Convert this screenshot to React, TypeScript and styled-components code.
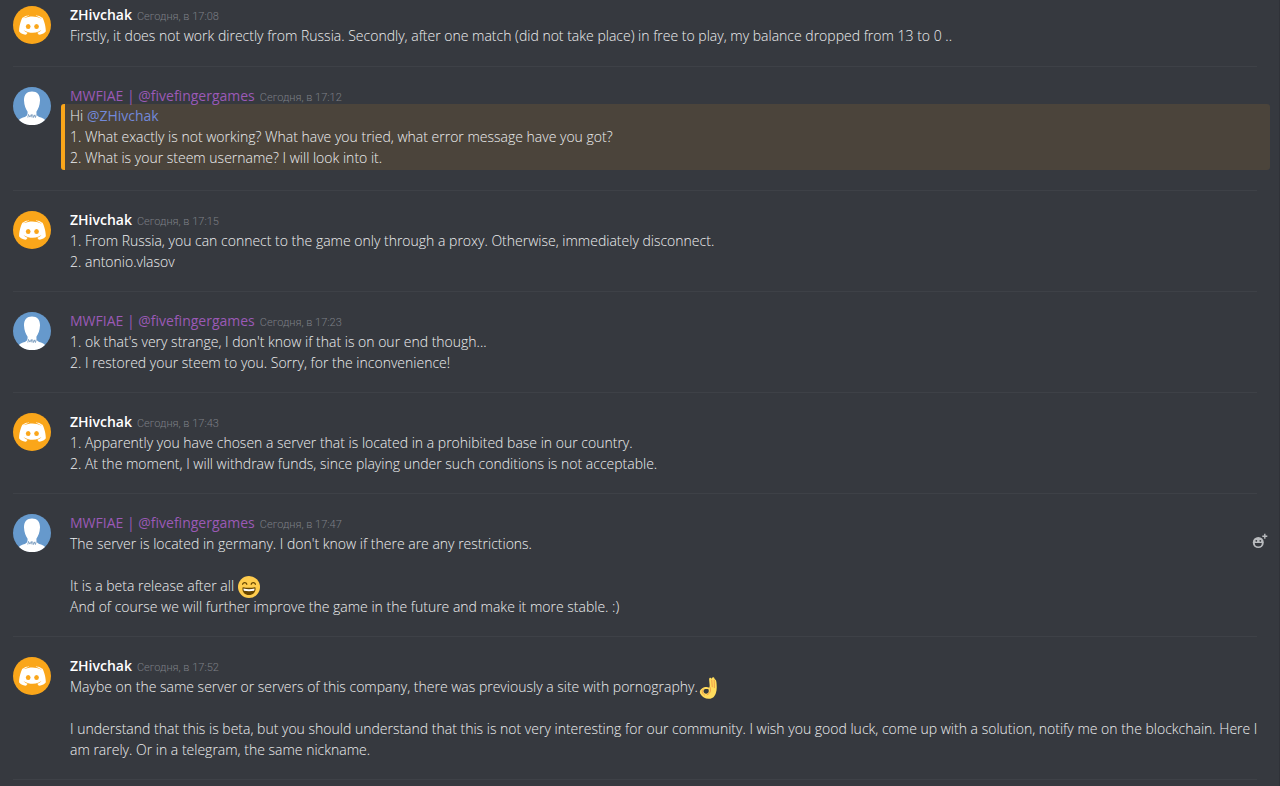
import React from "react";
import styled, { createGlobalStyle } from "styled-components";

const GlobalStyle = createGlobalStyle`
  * { box-sizing: border-box; }
  body {
    margin: 0;
    background: #36393f;
    color: #eeeff0;
    font-family: "Open Sans", "Noto Sans", sans-serif;
    font-size: 14px;
    font-weight: 300;
    font-variant-ligatures: none;
    line-height: 21px;
  }
`;

const Chat = styled.main`
  padding: 4px 10px 0 13px;
  border-right: 1px solid #303238;
  min-height: 100vh;
`;

const Message = styled.article<{ $first?: boolean }>`
  position: relative;
  display: flex;
  gap: 10px;
  margin-right: 12px;
  padding: ${(p) => (p.$first ? "0 0 20px" : "18px 0 19px")};
  border-bottom: 1px solid #3e4147;
`;

const AvatarImage = styled.svg`
  flex: none;
  width: 38px;
  height: 38px;
  margin-top: 2px;
`;

const Content = styled.div`
  flex: 1;
  min-width: 0;
`;

const Header = styled.header`
  display: flex;
  align-items: baseline;
  gap: 5px;
  height: 21px;
  padding-left: 9px;
`;

const Author = styled.h2<{ $staff?: boolean }>`
  margin: 0;
  font-size: 14px;
  font-weight: ${(p) => (p.$staff ? 400 : 600)};
  color: ${(p) => (p.$staff ? "#9b59b6" : "#ffffff")};
`;

const Time = styled.time`
  font-family: Roboto, "Noto Sans", sans-serif;
  font-size: 11px;
  color: #7c7f85;
`;

const Body = styled.div<{ $mentioned?: boolean }>`
  margin-right: -5px;
  padding-left: 9px;
  white-space: pre-line;
  ${(p) =>
    p.$mentioned &&
    `
    margin: -2px -13px 1px 0;
    padding: 1px 0 2px 5px;
    border-left: 4px solid #faa61a;
    border-radius: 3px;
    background: #4b443b;
  `}
`;

const Mention = styled.a`
  color: #7289da;
  font-weight: 400;
  text-decoration: none;
`;

const Emoji = styled.svg`
  width: 22px;
  height: 22px;
  margin: -3px 0;
  vertical-align: middle;
`;

const ReactButton = styled.button`
  position: absolute;
  top: 39px;
  right: -11px;
  width: 16px;
  height: 16px;
  padding: 0;
  border: 0;
  background: none;
  cursor: pointer;
  svg { display: block; }
`;

const MascotAvatar = () => (
  <AvatarImage viewBox="0 0 38 38" aria-hidden="true">
    <circle cx="19" cy="19" r="19" fill="#faa61a" />
    <g transform="translate(-.7 -1.2) scale(.0894)">
      <path
        fill="#fff"
        d="M375.04 295.424c0-82.432-36.864-149.248-36.864-149.248-36.864-27.648-71.936-26.88-71.936-26.88l-3.584 4.096c43.52 13.312 63.744 32.512 63.744 32.512-60.811-33.329-132.244-33.335-191.232-7.424-9.472 4.352-15.104 7.424-15.104 7.424s21.248-20.224 67.328-33.536l-2.56-3.072s-35.072-.768-71.936 26.88c0 0-36.864 66.816-36.864 149.248 0 0 21.504 37.12 78.08 38.912 0 0 9.472-11.52 17.152-21.248-32.512-9.728-44.8-30.208-44.8-30.208 3.766 2.636 9.976 6.053 10.496 6.4 43.21 24.198 104.588 32.126 159.744 8.96 8.96-3.328 18.944-8.192 29.44-15.104 0 0-12.8 20.992-46.336 30.464 7.68 9.728 16.896 20.736 16.896 20.736 56.576-1.792 78.08-38.912 78.08-38.912z"
      />
      <ellipse cx="177.7" cy="243.2" rx="26.1" ry="28.4" fill="#faa61a" />
      <ellipse cx="271.1" cy="243.2" rx="26.1" ry="28.4" fill="#faa61a" />
    </g>
  </AvatarImage>
);

const SilhouetteAvatar = () => (
  <AvatarImage viewBox="0 0 38 38" aria-hidden="true">
    <circle cx="19" cy="19" r="19" fill="#6699cc" />
    <path
      fill="#fff"
      d="M19 4.600c-5.400 0-8.200 3.700-8 9 .2 4.700 1.800 8.700 3.600 11.200 0 2.600-.1 4.200-2.800 5.100-2.500.8-4.800 1.500-5.800 3.100A19 19 0 0 0 32 33c-1-1.600-3.300-2.300-5.800-3.100-2.700-.9-2.800-2.500-2.800-5.100 1.800-2.500 3.400-6.500 3.600-11.200.2-5.300-2.600-9-8-9z"
    />
    <path
      fill="none"
      stroke="#6f93b8"
      strokeWidth=".8"
      d="M14.800 30.500l.7-3 1.400 2.600 1.400-2.600.7 3M19.500 27.500l.9 3 1-2.600 1 2.600.9-3"
    />
  </AvatarImage>
);

const GrinEmoji = () => (
  <Emoji viewBox="0 0 36 36" role="img" aria-label="smile">
    <circle cx="18" cy="18" r="18" fill="#ffcc4d" />
    <path
      fill="#664500"
      d="M28.500 19c-.1-.4-.4-.7-.9-.7C24.600 19 21.300 19.300 18 19.300s-6.600-.3-9.600-1c-.5 0-.8.3-.9.7-1.300 5.700 2.900 12 10.500 12s11.800-6.300 10.500-12z"
    />
    <path fill="#fff" d="M9 20.600c5.500 1.300 12.500 1.300 18 0 .1 1.300-.1 2.600-.7 3.400-5 1-11.600 1-16.600 0-.6-.8-.8-2.100-.7-3.400z" />
    <path
      fill="none"
      stroke="#664500"
      strokeWidth="2"
      strokeLinecap="round"
      d="M7.500 13.500c1.200-3.700 5.800-3.700 7 0M21.500 13.500c1.200-3.700 5.800-3.700 7 0"
    />
  </Emoji>
);

const OkHandEmoji = () => (
  <Emoji viewBox="0 0 36 36" role="img" aria-label="ok hand">
    <path
      fill="#ffdc5d"
      d="M18.500 17.500C20 13 18 8 18.200 3.500c.2-2.600 3.400-2.800 4-.4l.6-1.500c.9-1.900 3.600-1.500 4 .5.3 1 .6 1.500 1.400 2 1.300.7 1.700 2.300 2 5 .7 6.500.8 12-.9 17-1.800 5.500-5 9.400-11 9.600C12 36 7 33 4 28c-2-3.500-1-7.300 2.500-9.300 3.500-2 8-3 12-1.200z"
    />
    <path fill="#36393f" d="M17.500 20.500c-3.800-1.500-7.500-.7-8.300 1.500-.9 2.600 1.500 5 4.500 5.500 3-.5 4.500-3 3.800-7z" />
    <path
      fill="none"
      stroke="#ef9645"
      strokeWidth="1.500"
      strokeLinecap="round"
      d="M20 17.500c1.500 5 0 9.500-5 11.500M22.500 5l.8 11M26.500 5.500l.3 12M8.500 20c-3.500 2.500-1.500 7 2 9.500"
    />
  </Emoji>
);

const AddReactionIcon = () => (
  <svg width="16" height="16" viewBox="0 0 16 16" aria-hidden="true">
    <circle cx="6.300" cy="9.500" r="5.500" fill="#b9bbbe" />
    <circle cx="4.300" cy="7.800" r=".9" fill="#36393f" />
    <circle cx="8.300" cy="7.800" r=".9" fill="#36393f" />
    <path fill="#36393f" d="M2.800 9.900h7a3.500 3.500 0 0 1-7 0z" />
    <path stroke="#b9bbbe" strokeWidth="1.400" d="M12.800.8v5M10.300 3.300h5" />
  </svg>
);

type PostProps = {
  staff?: boolean;
  time: string;
  first?: boolean;
  mentioned?: boolean;
  reactable?: boolean;
  children: React.ReactNode;
};

const Post = ({ staff, time, first, mentioned, reactable, children }: PostProps) => (
  <Message $first={first}>
    {staff ? <SilhouetteAvatar /> : <MascotAvatar />}
    <Content>
      <Header>
        <Author $staff={staff}>{staff ? "MWFIAE | @fivefingergames" : "ZHivchak"}</Author>
        <Time dateTime={time}>Сегодня, в {time}</Time>
      </Header>
      <Body $mentioned={mentioned}>{children}</Body>
    </Content>
    {reactable && (
      <ReactButton type="button" aria-label="Add reaction">
        <AddReactionIcon />
      </ReactButton>
    )}
  </Message>
);

export default function App() {
  return (
    <>
      <GlobalStyle />
      <Chat>
        <Post first time="17:08">
          {"Firstly, it does not work directly from Russia. Secondly, after one match (did not take place) in free to play, my balance dropped from 13 to 0 .."}
        </Post>
        <Post staff mentioned time="17:12">
          Hi <Mention href="#zhivchak">@ZHivchak</Mention>
          {"\n1. What exactly is not working? What have you tried, what error message have you got?\n2. What is your steem username? I will look into it."}
        </Post>
        <Post time="17:15">
          {"1. From Russia, you can connect to the game only through a proxy. Otherwise, immediately disconnect.\n2. antonio.vlasov"}
        </Post>
        <Post staff time="17:23">
          {"1. ok that's very strange, I don't know if that is on our end though...\n2. I restored your steem to you. Sorry, for the inconvenience!"}
        </Post>
        <Post time="17:43">
          {"1. Apparently you have chosen a server that is located in a prohibited base in our country.\n2. At the moment, I will withdraw funds, since playing under such conditions is not acceptable."}
        </Post>
        <Post staff reactable time="17:47">
          {"The server is located in germany. I don't know if there are any restrictions.\n\nIt is a beta release after all "}
          <GrinEmoji />
          {"\nAnd of course we will further improve the game in the future and make it more stable. :)"}
        </Post>
        <Post time="17:52">
          {"Maybe on the same server or servers of this company, there was previously a site with pornography."}
          <OkHandEmoji />
          {"\n\nI understand that this is beta, but you should understand that this is not very interesting for our community. I wish you good luck, come up with a solution, notify me on the blockchain. Here I am rarely. Or in a telegram, the same nickname."}
        </Post>
      </Chat>
    </>
  );
}
